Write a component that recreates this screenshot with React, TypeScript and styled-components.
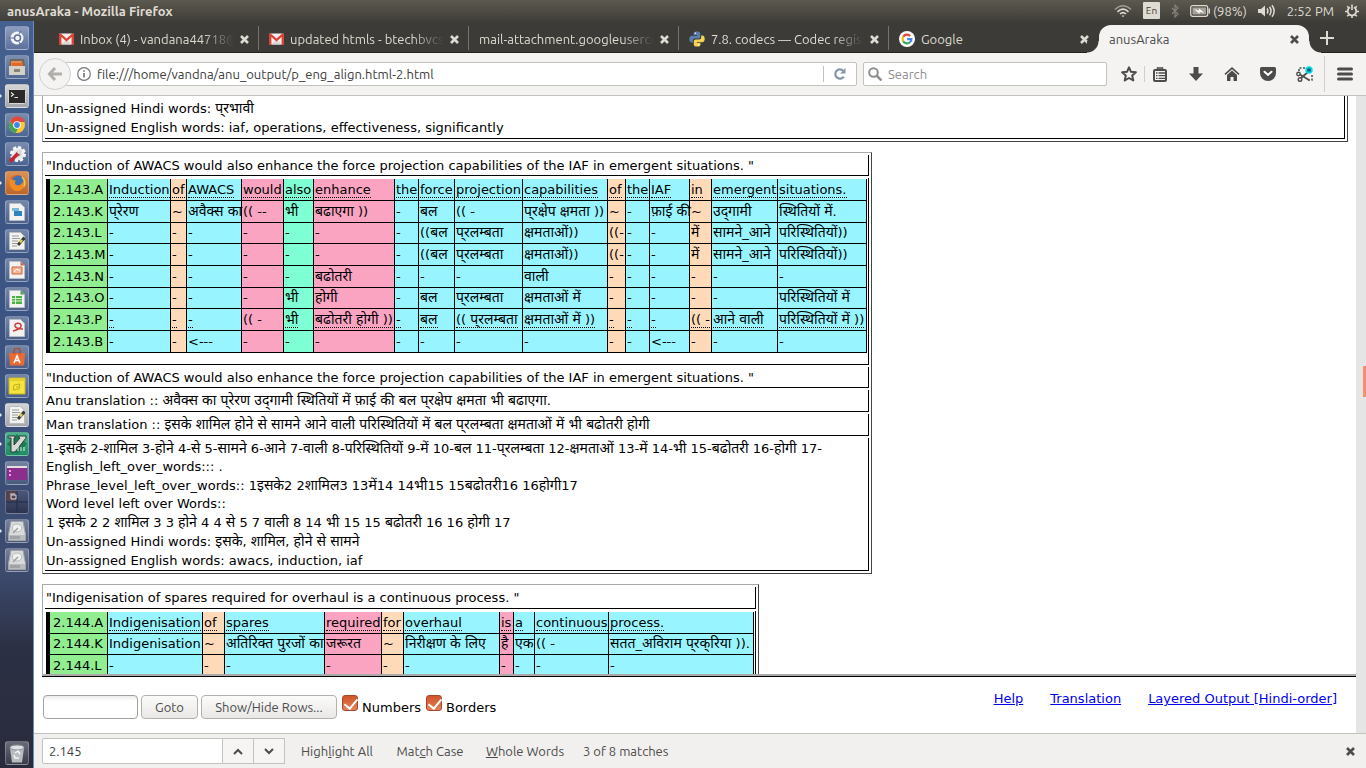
import React from 'react';
import styled, { createGlobalStyle, css } from 'styled-components';

const Global = createGlobalStyle`
  * { box-sizing: border-box; }
  body { margin: 0; }
  button, input { font: inherit; margin: 0; }
`;

const UI_FONT = '"Ubuntu", "Noto Sans", "Open Sans", sans-serif';
const PAGE_FONT = '"DejaVu Sans", "Noto Sans Devanagari", "Noto Sans", sans-serif';

/* ---------- desktop frame ---------- */

const Desktop = styled.div`
  display: flex;
  flex-direction: column;
  height: 100vh;
  overflow: hidden;
  background: #fff;
  font-family: ${UI_FONT};
  font-size: 13px;
`;

const TopPanel = styled.header`
  display: flex;
  align-items: center;
  justify-content: space-between;
  flex: none;
  height: 21px;
  padding: 0 7px;
  color: #dfdbd2;
  background: linear-gradient(#5c594f, #3f3e39);
`;

const WindowTitle = styled.strong`
  font-size: 13px;
  font-weight: 700;
  line-height: 20px;
`;

const Indicators = styled.div`
  display: flex;
  align-items: center;
  gap: 11px;
  height: 20px;
`;

const Indicator = styled.span`
  display: flex;
  align-items: center;
  gap: 3px;
  font-size: 13px;
  line-height: 20px;
  svg { display: block; }
`;

const Keyboard = styled.span`
  width: 17px;
  height: 17px;
  border-radius: 1px;
  background: #dfdbd2;
  color: #3c3b37;
  font-size: 10px;
  line-height: 17px;
  text-align: center;
`;

const Workspace = styled.div`
  display: flex;
  flex: 1;
  min-height: 0;
`;

/* ---------- launcher ---------- */

const LauncherBar = styled.nav`
  display: flex;
  flex-direction: column;
  gap: 5px;
  flex: none;
  width: 34px;
  padding: 5px 4px 3px 5px;
  border-right: 1px solid #6c8cba;
  background: linear-gradient(#46608f 0, #3d5787 20%, #3b5280 50%, #3c4a6c 74%, #2c3044 84%, #292b3c 100%);
`;

const Tile = styled.button<{ $tone?: string; $running?: boolean; $last?: boolean }>`
  position: relative;
  display: flex;
  align-items: center;
  justify-content: center;
  flex: none;
  width: 24px;
  height: 24px;
  padding: 0;
  border: 1px solid rgba(255, 255, 255, 0.25);
  border-radius: 3px;
  background: ${p => p.$tone || 'linear-gradient(rgba(255,255,255,.3), rgba(255,255,255,.08))'};
  ${p => p.$last && css`margin-top: auto;`}
  svg { display: block; }
  ${p => p.$running && css`
    &::before {
      content: '';
      position: absolute;
      left: -6px;
      top: 9px;
      border: 2px solid transparent;
      border-left-color: #e8ebf2;
    }
  `}
`;

/* ---------- browser chrome ---------- */

const Browser = styled.main`
  display: flex;
  flex-direction: column;
  flex: 1;
  min-width: 0;
`;

const TabStrip = styled.div`
  display: flex;
  align-items: flex-end;
  flex: none;
  height: 32px;
  padding-left: 15px;
  border-bottom: 1px solid #24221f;
  background: #3c3b37;
`;

const Tab = styled.div<{ $active?: boolean; $bare?: boolean }>`
  position: relative;
  display: flex;
  align-items: center;
  flex: 0 1 210px;
  min-width: 0;
  height: 24px;
  padding: 2px 9px 0 10px;
  gap: 6px;
  margin-bottom: 2px;
  color: #dfdbd2;
  border-right: 1px solid #76746c;
  line-height: 20px;
  svg { flex: none; display: block; }
  ${p => p.$bare && css`border-right-color: transparent;`}
  ${p => p.$active && css`
    height: 28px;
    margin-bottom: -1px;
    padding-top: 0;
    padding-right: 10px;
    border-right: 0;
    border-radius: 12px 12px 0 0;
    background: #f4f3f1;
    color: #4c4c4c;
    &::before, &::after {
      content: '';
      position: absolute;
      bottom: 0;
      width: 12px;
      height: 12px;
    }
    &::before { left: -12px; background: radial-gradient(circle at 0 0, #3c3b37 11px, #f4f3f1 12px); }
    &::after { right: -12px; background: radial-gradient(circle at 100% 0, #3c3b37 11px, #f4f3f1 12px); }
  `}
`;

const TabLabel = styled.span<{ $fade?: boolean }>`
  flex: 1;
  min-width: 0;
  overflow: hidden;
  white-space: nowrap;
  font-size: 13px;
  ${p => p.$fade && css`mask-image: linear-gradient(90deg, #000 calc(100% - 32px), transparent);`}
`;

const IconButton = styled.button`
  display: flex;
  align-items: center;
  justify-content: center;
  flex: none;
  padding: 0;
  border: 0;
  background: none;
  color: inherit;
  svg { display: block; }
`;

const NewTab = styled(IconButton)`
  width: 36px;
  height: 28px;
  color: #dfdbd2;
`;

const NavBar = styled.div`
  display: flex;
  align-items: center;
  flex: none;
  height: 43px;
  border-bottom: 1px solid #c3c2bf;
  background: #f4f3f1;
  color: #4c4c4c;
`;

const BackButton = styled(IconButton)`
  position: relative;
  width: 32px;
  height: 32px;
  margin-left: 5px;
  border: 1px solid #d2d0cd;
  border-radius: 50%;
  background: #f4f3f1;
  color: #b0afac;
`;

const AddressBox = styled.div`
  display: flex;
  align-items: center;
  flex: 1;
  min-width: 0;
  height: 24px;
  margin-left: -6px;
  padding-left: 11px;
  border: 1px solid #c3c2bf;
  border-radius: 2px;
  background: #fff;
`;

const PlainInput = styled.input`
  flex: 1;
  min-width: 0;
  padding: 0 6px;
  border: 0;
  outline: 0;
  background: none;
  color: #3c3c3c;
  font-size: 13px;
  line-height: 20px;
  &::placeholder { color: #8e8e8e; opacity: 1; }
`;

const Reload = styled(IconButton)`
  width: 33px;
  height: 16px;
  border-left: 1px solid #c3c2bf;
  color: #8795a8;
`;

const SearchBox = styled(AddressBox)`
  flex: 0 1 244px;
  margin-left: 6px;
  padding-left: 4px;
`;

const Tools = styled.div`
  display: flex;
  align-items: center;
  height: 100%;
  margin-left: 4px;
  padding-right: 3px;
  ${IconButton} { width: 36px; height: 28px; }
`;

const ToolDivider = styled.span<{ $tall?: boolean }>`
  width: 1px;
  height: ${p => (p.$tall ? 36 : 16)}px;
  margin: 0 ${p => (p.$tall ? 2 : -3)}px;
  background: #d0cfcc;
`;

/* ---------- document ---------- */

const Viewport = styled.div`
  display: flex;
  flex: 1;
  min-height: 0;
`;

const Frames = styled.div`
  display: flex;
  flex-direction: column;
  flex: 1;
  min-width: 0;
  font-family: ${PAGE_FONT};
  font-size: 13px;
  color: #000;
`;

const Track = styled.div`
  display: flex;
  flex-direction: column;
  align-items: flex-end;
  flex: none;
  width: 10px;
  padding-top: 270px;
  background: #e5e5e5;
`;

const Thumb = styled.div`
  width: 3px;
  height: 31px;
  background: #f0916c;
`;

const Page = styled.div`
  display: flex;
  flex-direction: column;
  align-items: flex-start;
  gap: 10px;
  flex: 1;
  min-height: 0;
  padding: 0 8px;
  overflow: hidden;
`;

const Block = styled.section<{ $wide?: boolean }>`
  display: flex;
  flex-direction: column;
  flex: none;
  gap: 2px;
  padding: 2px;
  border: 1px solid #444;
  border-top-color: #aaa;
  border-left-color: #aaa;
  ${p => p.$wide && css`
    align-self: stretch;
    border-top: 0;
    padding-top: 0;
  `}
`;

const Cell = styled.div<{ $tall?: boolean }>`
  padding: 1px 0 0;
  padding-left: 1px;
  border-right: 1px solid #000;
  border-bottom: 1px solid #000;
  line-height: ${p => (p.$tall ? 20 : 19)}px;
  white-space: nowrap;
`;

const GridCell = styled(Cell)`
  padding: 1px 1px 11px 1px;
`;

const NoteLine = styled.div`
  line-height: 19px;
  ${Cell} > &:nth-child(2), ${Cell} > &:nth-child(4) { line-height: 18px; }
`;

const UpperCell = styled(Cell)`
  padding-top: 3px;
  padding-bottom: 1px;
`;

const Grid = styled.table<{ $short: number }>`
  table-layout: fixed;
  border-collapse: separate;
  border-spacing: 0;
  border-left: 4px solid #000;
  line-height: 20px;
  tr { height: 22px; }
  tr:nth-child(3n + ${p => p.$short}) { height: 21px; }
`;

const tones: Record<string, string> = {
  c: '#98f5ff',
  p: '#ffdab9',
  k: '#faa4c2',
  g: '#7fffd4',
};

const Word = styled.td<{ $tone: string }>`
  padding: 0 0 0 1px;
  border-right: 1px solid #000;
  border-bottom: 1px solid #000;
  background: ${p => tones[p.$tone]};
  vertical-align: middle;
`;

const RowLabel = styled.th`
  padding: 0 0 0 3px;
  border-right: 1px solid #000;
  border-bottom: 1px solid #000;
  background: #90ee90;
  font-weight: 400;
  text-align: left;
`;

const Gloss = styled.span`
  border-bottom: 1px dotted #000;
`;

const Hindi = styled.span`
  font-size: 14px;
  line-height: 1;
`;

const Footer = styled.footer`
  display: flex;
  flex: none;
  height: 59px;
  margin-left: 8px;
  border-top: 2px solid #aaa;
`;

const FooterInner = styled.div`
  display: flex;
  align-items: flex-start;
  justify-content: space-between;
  flex: 1;
  padding: 18px 19px 0 1px;
  border-top: 1px solid #000;
`;

const Controls = styled.form`
  display: flex;
  align-items: center;
  gap: 3px;
  height: 24px;
`;

const GotoInput = styled.input`
  width: 95px;
  height: 24px;
  border: 1px solid #a5a29e;
  border-radius: 4px;
  background: linear-gradient(#ececec, #fff 5px);
`;

const GtkButton = styled.button<{ $width: number }>`
  width: ${p => p.$width}px;
  height: 24px;
  padding: 0;
  border: 1px solid #b4b1ad;
  border-radius: 4px;
  background: linear-gradient(#fbfbfa, #e9e8e6);
  color: #4c4c4c;
  font-family: ${UI_FONT};
  font-size: 13px;
  line-height: 20px;
`;

const Check = styled.label`
  display: flex;
  align-items: flex-start;
  gap: 4px;
  height: 24px;
  margin-left: 2px;
  line-height: 25px;
`;

const CheckBox = styled.input`
  appearance: none;
  width: 16px;
  height: 16px;
  border: 1px solid #a6462a;
  border-radius: 3px;
  background: linear-gradient(#cf5527, #e48159);
  position: relative;
  &:checked::after {
    content: '';
    position: absolute;
    left: 4px;
    top: 0;
    width: 6px;
    height: 11px;
    border: solid #fff;
    border-width: 0 2px 2px 0;
    transform: rotate(40deg);
  }
`;

const Links = styled.div`
  display: flex;
  gap: 27px;
  line-height: 19px;
  margin-top: -6px;
  a { color: #0000ee; }
`;

const FindBar = styled.form`
  display: flex;
  align-items: center;
  flex: none;
  height: 35px;
  padding: 0 11px 0 8px;
  border-top: 1px solid #c3c2bf;
  background: #f1f0ee;
  color: #4c4c4c;
  line-height: 20px;
`;

const FindInput = styled.input`
  width: 181px;
  height: 26px;
  padding: 0 6px;
  border: 1px solid #c3c2bf;
  border-radius: 2px 0 0 2px;
  background: #fff;
  color: #3c3c3c;
  font-size: 13px;
`;

const StepButton = styled(IconButton)`
  width: 31px;
  height: 26px;
  border: 1px solid #c3c2bf;
  border-left: 0;
  background: #f6f5f4;
`;

const FindToggle = styled.button<{ $width: number }>`
  width: ${p => p.$width}px;
  padding: 0;
  border: 0;
  background: none;
  color: inherit;
  font-size: 13px;
  text-align: center;
  white-space: nowrap;
`;

const FindOptions = styled.div`
  display: flex;
  flex: 1;
  gap: 14px;
  padding-left: 10px;
`;

/* ---------- icons ---------- */

const CloseIcon = () => (
  <svg width="9" height="9" viewBox="0 0 9 9" stroke="currentColor" strokeWidth="2.6">
    <path d="M1 1l7 7M8 1L1 8" />
  </svg>
);

const GmailIcon = () => (
  <svg width="15" height="12" viewBox="0 0 15 12">
    <rect x="0.5" y="0.5" width="14" height="11" fill="#f3efee" />
    <path d="M2.5 11.5L7.5 6l5 5.5z" fill="#dcd6d4" />
    <path d="M0 12V1.2L1.2 0 7.5 5.6 13.8 0 15 1.2V12h-2.4V4L7.5 8.5 2.4 4v8z" fill="#d94437" />
  </svg>
);

const PythonIcon = () => (
  <svg width="16" height="16" viewBox="0 0 16 16">
    <path d="M7.8.4C5 .4 4.6 1.5 4.6 2.6v1.5h3.6v.7H2.8C1.2 4.8.3 6.1.3 8s.8 3.4 2.2 3.4h1.3V9.6c0-1.2.9-2 2.1-2h3.500c1 0 1.800-.8 1.800-1.800V2.600C11.200 1 9.900.4 7.800.4z" fill="#5a7fb3" />
    <path d="M8.200 15.600c2.800 0 3.200-1.100 3.200-2.200v-1.500H7.800v-.7h5.400c1.600 0 2.500-1.300 2.500-3.200s-.8-3.400-2.200-3.400h-1.300v1.800c0 1.200-.9 2-2.100 2H6.600c-1 0-1.800.8-1.800 1.800v3.200c0 1.600 1.300 2.200 3.400 2.200z" fill="#f4d452" />
    <circle cx="6.3" cy="2.3" r=".7" fill="#fff" />
    <circle cx="9.7" cy="13.7" r=".7" fill="#fff" />
  </svg>
);

const GoogleIcon = () => (
  <svg width="16" height="16" viewBox="0 0 16 16" fill="none" strokeWidth="2.2">
    <circle cx="8" cy="8" r="8" fill="#fff" />
    <path d="M4.2 5.8A4.4 4.4 0 0 1 11.2 5" stroke="#ea4335" />
    <path d="M4.2 5.8a4.5 4.5 0 0 0 0 4.4" stroke="#fbbc05" />
    <path d="M4.2 10.2a4.4 4.4 0 0 0 6.8 1.1" stroke="#34a853" />
    <path d="M11 11.3a4.4 4.4 0 0 0 1.4-3.1H8.2" stroke="#4285f4" />
  </svg>
);

const WifiIcon = () => (
  <svg width="18" height="14" viewBox="0 0 18 14" fill="none" stroke="#dfdbd2" strokeWidth="1.6">
    <path d="M1 5.5Q9-2 17 5.5" opacity=".55" />
    <path d="M3.5 7.8Q9 2.5 14.5 7.8" />
    <path d="M6 10Q9 7.2 12 10" />
    <path d="M7.5 11.5h3L9 13.3z" fill="#dfdbd2" stroke="none" />
  </svg>
);

const BluetoothIcon = () => (
  <svg width="8" height="14" viewBox="0 0 8 14" fill="none" stroke="#85827a" strokeWidth="1.2">
    <path d="M1 4l6 6-3 3V1l3 3-6 6" />
  </svg>
);

const BatteryIcon = () => (
  <svg width="20" height="12" viewBox="0 0 20 12">
    <rect x=".7" y=".7" width="17" height="10.6" rx="2" fill="none" stroke="#dfdbd2" strokeWidth="1.2" />
    <rect x="2.5" y="2.5" width="13.5" height="7" fill="#a5a299" />
    <path d="M18.5 3.5h1.500v5h-1.500z" fill="#dfdbd2" />
    <path d="M4 4l5 1.800V3.500L14.500 8 9.500 6.800V9z" fill="#fff" />
  </svg>
);

const VolumeIcon = () => (
  <svg width="18" height="14" viewBox="0 0 18 14" fill="none" stroke="#dfdbd2" strokeWidth="1.5">
    <path d="M0 5h3l4-3.5v11L3 9H0z" fill="#dfdbd2" stroke="none" />
    <path d="M9 4.5q1.8 2.5 0 5M11.5 2.8q3 4.2 0 8.4M14 1.2q4.3 5.8 0 11.6" />
  </svg>
);

const PowerIcon = () => (
  <svg width="14" height="14" viewBox="0 0 14 14" fill="none" stroke="#dfdbd2">
    <path d="M5 3.3a4.3 4.3 0 1 0 4 0" strokeWidth="1.8" />
    <path d="M7 .5v5.5" strokeWidth="1.6" />
    <path d="M2.2 2.2l1.5 1.5M11.8 2.2l-1.5 1.5M0 7.5h2M12 7.5h2M2.2 12.3l1.5-1.5M11.8 12.3l-1.5-1.5M7 12v2" strokeWidth="1.6" />
  </svg>
);

const Terminal = () => (
  <svg width="18" height="15" viewBox="0 0 18 15">
    <rect x=".5" y=".5" width="17" height="14" rx="1" fill="#2b2a29" stroke="#d8d8d8" />
    <path d="M3 3.5l2.5 2L3 7.5M6.5 8.5H10" fill="none" stroke="#e8e8e8" strokeWidth="1.2" />
  </svg>
);

const Sheet = ({ children }: { children?: React.ReactNode }) => (
  <svg width="16" height="18" viewBox="0 0 16 18">
    <path d="M.5.5h11l4 4v13H.5z" fill="#f2f2f0" stroke="#b8bcc4" />
    {children}
  </svg>
);

const Drive = () => (
  <svg width="18" height="20" viewBox="0 0 18 20">
    <path d="M3 .5h12l2.5 13v6H.5v-6z" fill="#d8dadb" stroke="#a1a4a8" />
    <ellipse cx="9" cy="7" rx="4.8" ry="4" fill="#eff0f0" stroke="#b7b9bb" />
    <path d="M10 7L5 12" stroke="#9b9ea0" strokeWidth="1.5" />
    <path d="M1 14h16v5H1z" fill="#b9bcbf" />
    <path d="M3 15v3M5 15v3M7 15v3M9 15v3M11 15v3" stroke="#85888c" />
  </svg>
);

const PenPage = () => (
  <Sheet>
    <path d="M3 4h7M3 6.5h8M3 9h6M3 11.5h5M3 14h5" stroke="#9a9a9a" />
    <path d="M15.5 5.5L9 13" stroke="#3b3b36" strokeWidth="3" />
    <path d="M13 8l-2 2.5" stroke="#e3d24e" strokeWidth="2.5" />
  </Sheet>
);

const launcher: { name: string; tone?: string; running?: boolean; art: React.ReactNode }[] = [
  {
    name: 'Dash',
    tone: 'linear-gradient(#8c9dc0, #5d719c)',
    art: (
      <svg width="16" height="16" viewBox="0 0 16 16">
        <circle cx="8" cy="8" r="6.5" fill="#f5f6f9" />
        <circle cx="8.5" cy="8" r="3" fill="none" stroke="#5d719c" strokeWidth="1.5" />
        <path d="M0 8h5M10 4l2-3M10 12l2 3" stroke="#5d719c" strokeWidth="1.2" />
      </svg>
    ),
  },
  {
    name: 'Files',
    art: (
      <svg width="18" height="18" viewBox="0 0 18 18">
        <path d="M2 1h14l1 7v9H1V8z" fill="#6d6861" />
        <path d="M3 3h11v5H3z" fill="#e98a4c" />
        <path d="M4 5h11v4H4z" fill="#dd6a2c" />
        <path d="M1 8h16v9H1z" fill="#d4cfc7" />
        <path d="M6 11h6v3H6z" fill="#87827a" />
      </svg>
    ),
  },
  { name: 'Terminal', tone: 'linear-gradient(#d4d4d6, #a5a6ab)', running: true, art: <Terminal /> },
  {
    name: 'Chrome',
    art: (
      <svg width="18" height="18" viewBox="0 0 18 18">
        <circle cx="9" cy="9" r="8" fill="#fcc934" />
        <path d="M2.1 5A8 8 0 0 1 16.9 6H9a3.5 3.5 0 0 0-3.4 4z" fill="#e04a3f" />
        <path d="M2.1 5l4 6.5A3.5 3.5 0 0 0 10 12.4L7.8 17A8 8 0 0 1 2.1 5z" fill="#3fa757" />
        <circle cx="9" cy="9" r="3.8" fill="#fff" />
        <circle cx="9" cy="9" r="2.9" fill="#4285e8" />
      </svg>
    ),
  },
  {
    name: 'Settings',
    art: (
      <svg width="19" height="19" viewBox="0 0 19 19">
        <circle cx="10" cy="9" r="6.5" fill="#e9e9e9" stroke="#f5f5f5" strokeWidth="3" strokeDasharray="3 2" />
        <circle cx="10" cy="9" r="2.5" fill="#9aa3b4" />
        <path d="M2 16.5L10.5 8" stroke="#c7262c" strokeWidth="3.5" />
        <path d="M10 8.5l3-3.5" stroke="#d9d9d9" strokeWidth="3" />
      </svg>
    ),
  },
  {
    name: 'Firefox',
    tone: 'linear-gradient(#d99258, #b9672d)',
    running: true,
    art: (
      <svg width="18" height="18" viewBox="0 0 18 18">
        <circle cx="9" cy="9" r="8" fill="#e8641b" />
        <circle cx="10" cy="7" r="5.5" fill="#3d72b4" />
        <path d="M1.5 4.5C3 5 3.5 6 6 6.2c2 0 2.3 1 .8 2.2 0 2.5 2.7 3.6 5 2.6 2.2-1 2.7-3 4.8-4.5C18 12.5 14 17 9 17S0 11 1.5 4.5z" fill="#f18a22" />
        <path d="M14 3c2.5 2.5 3.5 6 2 9.500" stroke="#f6c545" strokeWidth="1.5" fill="none" />
      </svg>
    ),
  },
  {
    name: 'Writer',
    art: <Sheet><path d="M3 5h7v3H3z" fill="#7fb7d9" /><path d="M5 8h8v5H5z" fill="#2f83bd" /></Sheet>,
  },
  { name: 'Text Editor', art: <PenPage /> },
  {
    name: 'Impress',
    art: <Sheet><path d="M11.500.5l4 4h-4z" fill="#cd6540" /><path d="M3 6h10v7H3z" fill="#f1b795" stroke="#cd6540" /><path d="M5 11l3-3 3 2" stroke="#fff" fill="none" /></Sheet>,
  },
  {
    name: 'Calc',
    art: <Sheet><path d="M11.500.5l4 4h-4z" fill="#3faa3b" /><path d="M3 6h10v8H3z" fill="#49b045" /><path d="M3 8.5h10M3 11h10M6.5 6v8" stroke="#d9f2d3" /></Sheet>,
  },
  {
    name: 'Document Viewer',
    art: <Sheet><path d="M4 12c4-1 9-3 8-6S5 4 6 7s5 3 8 3" stroke="#cf3a3a" strokeWidth="1.5" fill="none" /></Sheet>,
  },
  {
    name: 'Software',
    art: (
      <svg width="18" height="18" viewBox="0 0 18 18">
        <path d="M1 5h16l-1 12.5H2z" fill="#ec6a32" />
        <path d="M6 6V3a3 3 0 0 1 6 0v3" fill="none" stroke="#b14a1d" strokeWidth="1.3" />
        <path d="M6 15l3-7 3 7M7 12.5h4" fill="none" stroke="#fff" strokeWidth="1.5" />
      </svg>
    ),
  },
  {
    name: 'Notes',
    art: (
      <svg width="18" height="18" viewBox="0 0 18 18">
        <path d="M1 1h16v16H1z" fill="#f6e43c" stroke="#c7b426" />
        <path d="M1.500 1.500h15v2.500h-15z" fill="#e3cf2e" />
        <path d="M5 13l1-5 6-1-1 5zM8 10h3" fill="none" stroke="#c2b01f" />
      </svg>
    ),
  },
  { name: 'gedit', tone: 'linear-gradient(#d4d4d6, #a5a6ab)', running: true, art: <PenPage /> },
  {
    name: 'Vim',
    tone: 'linear-gradient(#4bb38d, #1f8a63)',
    running: true,
    art: (
      <svg width="20" height="20" viewBox="0 0 20 20">
        <path d="M10 0l10 10-10 10L0 10z" fill="#1c7a50" />
        <path d="M1 2h7v2H7v7l6-7h-1V2h7v2L8 18H4V4H1z" fill="#d5dad8" stroke="#2d3d37" />
        <path d="M11 12v5M14 13v4M17 13v4" stroke="#e6eae8" />
      </svg>
    ),
  },
  {
    name: 'Purple Window',
    art: (
      <svg width="20" height="14" viewBox="0 0 20 14">
        <path d="M0 0h20v14H0z" fill="#8e2e8c" />
        <path d="M0 0h20v2H0z" fill="#e5dfe3" />
        <path d="M2 4h2v2H2zM2 8h2v2H2z" fill="#e9a4e3" />
      </svg>
    ),
  },
  {
    name: 'Workspaces',
    tone: 'linear-gradient(#4c567a, #2c3450)',
    art: (
      <svg width="22" height="22" viewBox="0 0 22 22">
        <path d="M0 0h10v10H0z" fill="#55424f" />
        <path d="M11 0v22M0 11h22" stroke="#232a42" />
        <path d="M5 4h5v4H5zM4 3h5" fill="none" stroke="#dcd9dd" />
      </svg>
    ),
  },
  { name: 'Disk 1', running: true, art: <Drive /> },
  { name: 'Disk 2', art: <Drive /> },
];

const TrashArt = () => (
  <svg width="16" height="19" viewBox="0 0 16 19">
    <path d="M1 4h14l-2 14.5H3z" fill="#b9bcbf" />
    <ellipse cx="8" cy="3.5" rx="7" ry="2.5" fill="#dfe1e2" stroke="#8c8f93" />
    <path d="M6 9l3-2 2 3M10 14H6l-1-3" fill="none" stroke="#f5f5f5" strokeWidth="1.5" />
  </svg>
);

/* ---------- data ---------- */

const N = '\u200c';
const pra = `प्${N}र`;

type GridData = { id: string; widths: number[]; tones: string; short: number; rows: [string, string[], string?][] };

// The third entry of a row lists which cells carry a dotted gloss line (1 = yes).
const grid143: GridData = {
  id: '2.143',
  widths: [58, 63, 16, 55, 42, 30, 81, 24, 36, 68, 85, 18, 24, 40, 22, 66, 89],
  tones: 'cpckgkccccpccpcc',
  short: 0,
  rows: [
    ['A', ['Induction', 'of', 'AWACS', 'would', 'also', 'enhance', 'the', 'force', 'projection', 'capabilities', 'of', 'the', 'IAF', 'in', 'emergent', 'situations.'], '1111111111111111'],
    ['K', [`${pra}ेरण`, '~', 'अवैक्स का', '(( --', 'भी', 'बढाएगा ))', '-', 'बल', '(( -', `${pra}क्षेप क्षमता ))`, '~', '-', 'फ़ाई की', '~', `उद्${N}गामी`, 'स्थितियों में.']],
    ['L', ['-', '-', '-', '-', '-', '-', '-', '((बल', `${pra}लम्बता`, 'क्षमताओं))', '((-', '-', '-', 'में', 'सामने_आने', 'परिस्थितियों))']],
    ['M', ['-', '-', '-', '-', '-', '-', '-', '((बल', `${pra}लम्बता`, 'क्षमताओं))', '((-', '-', '-', 'में', 'सामने_आने', 'परिस्थितियों))']],
    ['N', ['-', '-', '-', '-', '-', 'बढोतरी', '-', '-', '-', 'वाली', '-', '-', '-', '-', '-', '-']],
    ['O', ['-', '-', '-', '-', 'भी', 'होगी', '-', 'बल', `${pra}लम्बता`, 'क्षमताओं में', '-', '-', '-', '-', '-', 'परिस्थितियों में']],
    ['P', ['-', '-', '-', '(( -', 'भी', 'बढोतरी होगी ))', '-', 'बल', `(( ${pra}लम्बता`, 'क्षमताओं में ))', '-', '-', '-', '(( -', 'आने वाली', 'परिस्थितियों में ))'], '1110111111111111'],
    ['B', ['-', '-', '<---', '-', '-', '-', '-', '-', '-', '-', '-', '-', '<---', '-', '-', '-']],
  ],
};

const grid144: GridData = {
  id: '2.144',
  widths: [58, 95, 22, 100, 57, 22, 96, 14, 21, 74, 145],
  tones: 'cpckpckccc',
  short: 2,
  rows: [
    ['A', ['Indigenisation', 'of', 'spares', 'required', 'for', 'overhaul', 'is', 'a', 'continuous', 'process.'], '1111111111'],
    ['K', ['Indigenisation', '~', 'अतिरिक्त पुरजों का', 'जरूरत', '~', 'निरीक्षण के लिए', 'है', 'एक', '(( -', `सतत_अविराम ${pra}क्${N}रिया )).`]],
    ['L', ['-', '-', '-', '-', '-', '-', '-', '-', '-', '-']],
  ],
};

/* Devanagari runs are set one size up so that they read level with the Latin text. */
const Mixed = ({ text }: { text: string }) => (
  <>
    {text.split(/([\u0900-\u097f\u200c]+)/).map((part, i) => (
      i % 2 ? <Hindi key={i} lang="hi">{part}</Hindi> : part
    ))}
  </>
);

const AlignmentGrid = ({ data }: { data: GridData }) => (
  <Grid $short={data.short} style={{ width: data.widths.reduce((a, b) => a + b, 4) }}>
    <colgroup>
      {data.widths.map((w, i) => <col key={i} style={{ width: w }} />)}
    </colgroup>
    <tbody>
      {data.rows.map(([suffix, words, gloss]) => (
        <tr key={suffix}>
          <RowLabel scope="row">{data.id}.{suffix}</RowLabel>
          {words.map((w, i) => (
            <Word key={i} $tone={data.tones[i]}>
              {gloss && gloss[i] === '1' ? <Gloss><Mixed text={w} /></Gloss> : <Mixed text={w} />}
            </Word>
          ))}
        </tr>
      ))}
    </tbody>
  </Grid>
);

const sentence143 = '"Induction of AWACS would also enhance the force projection capabilities of the IAF in emergent situations. "';

const notes143 = [
  `1-इसके 2-शामिल 3-होने 4-से 5-सामने 6-आने 7-वाली 8-परिस्थितियों 9-में 10-बल 11-${pra}लम्बता 12-क्षमताओं 13-में 14-भी 15-बढोतरी 16-होगी 17-`,
  'English_left_over_words::: .',
  'Phrase_level_left_over_words:: 1इसके2 2शामिल3 13में14 14भी15 15बढोतरी16 16होगी17',
  'Word level left over Words::',
  '1 इसके 2 2 शामिल 3 3 होने 4 4 से 5 7 वाली 8 14 भी 15 15 बढोतरी 16 16 होगी 17',
  'Un-assigned Hindi words: इसके, शामिल, होने से सामने',
  'Un-assigned English words: awacs, induction, iaf',
];

const tabs = [
  { label: 'Inbox (4) - vandana44718@', icon: <GmailIcon />, fade: true },
  { label: 'updated htmls - btechbvcs', icon: <GmailIcon />, fade: true },
  { label: 'mail-attachment.googleuserco', fade: true },
  { label: '7.8. codecs — Codec regist', icon: <PythonIcon />, fade: true },
  { label: 'Google', icon: <GoogleIcon />, bare: true },
];

export default function App() {
  return (
    <Desktop>
      <Global />
      <TopPanel>
        <WindowTitle>anusAraka - Mozilla Firefox</WindowTitle>
        <Indicators>
          <Indicator><WifiIcon /></Indicator>
          <Keyboard>En</Keyboard>
          <Indicator><BluetoothIcon /></Indicator>
          <Indicator><BatteryIcon />(98%)</Indicator>
          <Indicator><VolumeIcon /></Indicator>
          <Indicator>2:52 PM</Indicator>
          <Indicator><PowerIcon /></Indicator>
        </Indicators>
      </TopPanel>
      <Workspace>
        <LauncherBar>
          {launcher.map(item => (
            <Tile key={item.name} aria-label={item.name} $tone={item.tone} $running={item.running}>{item.art}</Tile>
          ))}
          <Tile aria-label="Trash" $last><TrashArt /></Tile>
        </LauncherBar>
        <Browser>
          <TabStrip>
            {tabs.map(t => (
              <Tab key={t.label} $bare={t.bare}>
                {t.icon}
                <TabLabel $fade={t.fade}>{t.label}</TabLabel>
                <IconButton aria-label="Close tab"><CloseIcon /></IconButton>
              </Tab>
            ))}
            <Tab $active>
              <TabLabel>anusAraka</TabLabel>
              <IconButton aria-label="Close tab"><CloseIcon /></IconButton>
            </Tab>
            <NewTab aria-label="New tab">
              <svg width="14" height="14" viewBox="0 0 14 14" stroke="currentColor" strokeWidth="2"><path d="M7 0v14M0 7h14" /></svg>
            </NewTab>
          </TabStrip>
          <NavBar>
            <BackButton aria-label="Back">
              <svg width="16" height="14" viewBox="0 0 16 14" fill="none" stroke="currentColor" strokeWidth="3"><path d="M8 1L2.5 7 8 13M3 7h12" /></svg>
            </BackButton>
            <AddressBox>
              <svg width="14" height="14" viewBox="0 0 14 14" fill="none" stroke="#77777a">
                <circle cx="7" cy="7" r="6.3" strokeWidth="1.2" />
                <path d="M7 6v4.5M7 3.2v1.6" strokeWidth="1.7" />
              </svg>
              <PlainInput aria-label="Address" defaultValue="file:///home/vandna/anu_output/p_eng_align.html-2.html" />
              <Reload aria-label="Reload">
                <svg width="12" height="12" viewBox="0 0 12 12" fill="none" stroke="currentColor" strokeWidth="2.2">
                  <path d="M9.8 8.6A4.6 4.6 0 1 1 9.2 2.8" />
                  <path d="M11.5 0v5.500H6z" fill="currentColor" stroke="none" />
                </svg>
              </Reload>
            </AddressBox>
            <SearchBox>
              <svg width="14" height="14" viewBox="0 0 14 14" fill="none" stroke="#8e8e8e" strokeWidth="2">
                <circle cx="5.5" cy="5.5" r="4.3" />
                <path d="M8.5 8.5l5 5" strokeWidth="2.5" />
              </svg>
              <PlainInput aria-label="Search" placeholder="Search" />
            </SearchBox>
            <Tools>
              <IconButton aria-label="Bookmark">
                <svg width="16" height="16" viewBox="0 0 16 16" fill="none" stroke="currentColor" strokeWidth="2" strokeLinejoin="round">
                  <path d="M8 1.3l2 4.5 4.9.5-3.7 3.300 1.100 4.900L8 12l-4.300 2.500 1.100-4.900L1.100 6.300 6 5.800z" />
                </svg>
              </IconButton>
              <ToolDivider />
              <IconButton aria-label="Bookmarks list">
                <svg width="14" height="15" viewBox="0 0 14 15" fill="none" stroke="currentColor">
                  <rect x="1" y="3" width="12" height="11" rx="1" strokeWidth="2" />
                  <path d="M4.500 3V1h5v2" strokeWidth="1.5" />
                  <path d="M3 6h1.500M5.500 6H12M3 8.700h1.500M5.500 8.700H12M3 11.400h1.500M5.500 11.400H12" strokeWidth="1.3" />
                </svg>
              </IconButton>
              <IconButton aria-label="Downloads">
                <svg width="14" height="14" viewBox="0 0 14 14" fill="currentColor"><path d="M4.500 0h5v6.500H14L7 14 0 6.500h4.500z" /></svg>
              </IconButton>
              <IconButton aria-label="Home">
                <svg width="16" height="14" viewBox="0 0 16 14" fill="currentColor">
                  <path d="M8 0l7.500 6.800-1 1.200L8 2.200 1.500 8l-1-1.200z" />
                  <path d="M3 8l5-4.500L13 8v6H9.500v-4h-3v4H3z" />
                </svg>
              </IconButton>
              <IconButton aria-label="Pocket">
                <svg width="16" height="14" viewBox="0 0 16 14">
                  <path d="M1.500 0h13A1.500 1.500 0 0 1 16 1.500V6A8 8 0 0 1 0 6V1.500A1.500 1.500 0 0 1 1.500 0z" fill="#4c4c4c" />
                  <path d="M4.500 4.700L8 8l3.500-3.300" fill="none" stroke="#fff" strokeWidth="2" strokeLinecap="round" />
                </svg>
              </IconButton>
              <IconButton aria-label="Screenshot">
                <svg width="17" height="16" viewBox="0 0 17 16" fill="none" stroke="#4c4c4c">
                  <path d="M3 5V2h7M16 9v5h-4" strokeDasharray="2 1.5" strokeWidth="1.5" />
                  <circle cx="2.5" cy="8" r="1.7" strokeWidth="1.4" />
                  <circle cx="4" cy="13.5" r="1.8" strokeWidth="1.4" />
                  <path d="M4 8.500l9 5.500M5 12l7-6" strokeWidth="1.7" />
                  <circle cx="13" cy="4" r="3.8" fill="#00e5f5" stroke="none" />
                  <path d="M13 1.500v5M10.800 2.800l4.400 2.500M10.800 5.300l4.400-2.500" stroke="#134b63" />
                </svg>
              </IconButton>
              <ToolDivider $tall />
              <IconButton aria-label="Menu">
                <svg width="16" height="14" viewBox="0 0 16 14" stroke="currentColor" strokeWidth="3" strokeLinecap="round"><path d="M1.500 2h13M1.500 7h13M1.500 12h13" /></svg>
              </IconButton>
            </Tools>
          </NavBar>
          <Viewport>
            <Frames>
              <Page>
                <Block $wide>
                  <UpperCell>
                    <div><Mixed text={`Un-assigned Hindi words: ${pra}भावी`} /></div>
                    <div>Un-assigned English words: iaf, operations, effectiveness, significantly</div>
                  </UpperCell>
                </Block>
                <Block>
                  <Cell>{sentence143}</Cell>
                  <GridCell><AlignmentGrid data={grid143} /></GridCell>
                  <Cell>{sentence143}</Cell>
                  <Cell $tall><Mixed text={`Anu translation :: अवैक्स का ${pra}ेरण उद्${N}गामी स्थितियों में फ़ाई की बल ${pra}क्षेप क्षमता भी बढाएगा.`} /></Cell>
                  <Cell $tall><Mixed text={`Man translation :: इसके शामिल होने से सामने आने वाली परिस्थितियों में बल ${pra}लम्बता क्षमताओं में भी बढोतरी होगी`} /></Cell>
                  <Cell>
                    {notes143.map(line => <NoteLine key={line}><Mixed text={line} /></NoteLine>)}
                  </Cell>
                </Block>
                <Block>
                  <Cell $tall>"Indigenisation of spares required for overhaul is a continuous process. "</Cell>
                  <GridCell><AlignmentGrid data={grid144} /></GridCell>
                </Block>
              </Page>
              <Footer>
                <FooterInner>
                  <Controls onSubmit={e => e.preventDefault()}>
                    <GotoInput aria-label="Go to sentence" />
                    <GtkButton $width={57}>Goto</GtkButton>
                    <GtkButton $width={136} type="button">Show/Hide Rows...</GtkButton>
                    <Check><CheckBox type="checkbox" defaultChecked />Numbers</Check>
                    <Check><CheckBox type="checkbox" defaultChecked />Borders</Check>
                  </Controls>
                  <Links>
                    <a href="#help">Help</a>
                    <a href="#translation">Translation</a>
                    <a href="#layered">Layered Output [Hindi-order]</a>
                  </Links>
                </FooterInner>
              </Footer>
            </Frames>
            <Track><Thumb /></Track>
          </Viewport>
          <FindBar onSubmit={e => e.preventDefault()}>
            <FindInput aria-label="Find in page" defaultValue="2.145" />
            <StepButton type="button" aria-label="Previous match">
              <svg width="10" height="7" viewBox="0 0 10 7" fill="none" stroke="currentColor" strokeWidth="2"><path d="M1 6l4-4 4 4" /></svg>
            </StepButton>
            <StepButton type="button" aria-label="Next match">
              <svg width="10" height="7" viewBox="0 0 10 7" fill="none" stroke="currentColor" strokeWidth="2"><path d="M1 1l4 4 4-4" /></svg>
            </StepButton>
            <FindOptions>
              <FindToggle type="button" $width={84}>High<u>l</u>ight All</FindToggle>
              <FindToggle type="button" $width={74}>Mat<u>c</u>h Case</FindToggle>
              <FindToggle type="button" $width={88}><u>W</u>hole Words</FindToggle>
              <span>3 of 8 matches</span>
            </FindOptions>
            <IconButton type="button" aria-label="Close find bar"><CloseIcon /></IconButton>
          </FindBar>
        </Browser>
      </Workspace>
    </Desktop>
  );
}
